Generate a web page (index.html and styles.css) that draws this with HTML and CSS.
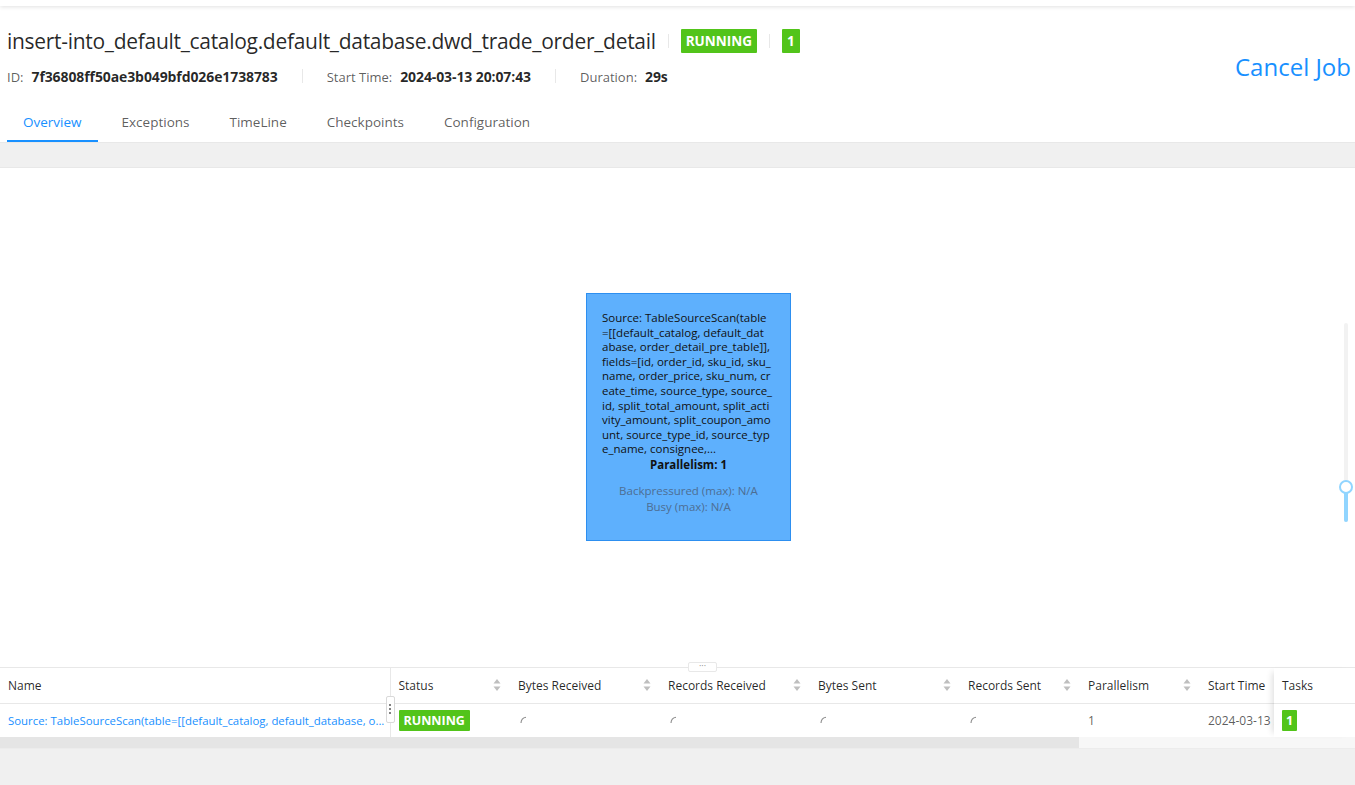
FILE: index.html
```html
<!DOCTYPE html>
<html>
<head>
<meta charset="utf-8">
<link rel="stylesheet" href="styles.css">
</head>
<body>
<div class="topbar"></div>
<header class="job-header">
  <div class="job-main">
    <div class="title-row">
      <h1 class="job-title">insert-into_default_catalog.default_database.dwd_trade_order_detail</h1>
      <span class="vdiv"></span>
      <span class="tag">RUNNING</span>
      <span class="vdiv"></span>
      <span class="tag tag-num">1</span>
    </div>
    <div class="meta-row">
      <span class="meta-item"><span class="meta-label">ID:</span><b class="meta-value">7f36808ff50ae3b049bfd026e1738783</b></span>
      <span class="meta-sep"></span>
      <span class="meta-item"><span class="meta-label">Start Time:</span><b class="meta-value">2024-03-13 20:07:43</b></span>
      <span class="meta-sep"></span>
      <span class="meta-item"><span class="meta-label">Duration:</span><b class="meta-value">29s</b></span>
    </div>
  </div>
  <a class="cancel-job">Cancel Job</a>
</header>
<nav class="tabs">
  <span class="tab active">Overview</span>
  <span class="tab">Exceptions</span>
  <span class="tab">TimeLine</span>
  <span class="tab">Checkpoints</span>
  <span class="tab">Configuration</span>
</nav>
<div class="band"></div>
<section class="canvas">
  <div class="node">
    <div class="node-desc">Source: TableSourceScan(table<br>=[[default_catalog, default_dat<br>abase, order_detail_pre_table]],<br>fields=[id, order_id, sku_id, sku_<br>name, order_price, sku_num, cr<br>eate_time, source_type, source_<br>id, split_total_amount, split_acti<br>vity_amount, split_coupon_amo<br>unt, source_type_id, source_typ<br>e_name, consignee,...</div>
    <div class="node-par">Parallelism: 1</div>
    <div class="node-stat">Backpressured (max): N/A<br>Busy (max): N/A</div>
  </div>
  <div class="zoom-slider">
    <div class="zoom-rail"></div>
    <div class="zoom-track"></div>
    <div class="zoom-handle"></div>
  </div>
</section>
<section class="table-panel">
  <div class="drag-handle">···</div>
  <div class="table-wrap">
    <div class="scroll-part">
      <table class="grid">
        <colgroup>
          <col class="c-name"><col class="c-120"><col class="c-150"><col class="c-150"><col class="c-150"><col class="c-120"><col class="c-120"><col class="c-150">
        </colgroup>
        <thead>
          <tr>
            <th class="name-col">Name</th>
            <th><div class="th-in">Status<svg class="sorter" width="8" height="14" viewBox="0 0 8 14"><path d="M4 1 L7.5 5.5 H0.5 Z M4 13 L7.5 8.5 H0.5 Z" fill="#bfbfbf"/></svg></div></th>
            <th><div class="th-in">Bytes Received<svg class="sorter" width="8" height="14" viewBox="0 0 8 14"><path d="M4 1 L7.5 5.5 H0.5 Z M4 13 L7.5 8.5 H0.5 Z" fill="#bfbfbf"/></svg></div></th>
            <th><div class="th-in">Records Received<svg class="sorter" width="8" height="14" viewBox="0 0 8 14"><path d="M4 1 L7.5 5.5 H0.5 Z M4 13 L7.5 8.5 H0.5 Z" fill="#bfbfbf"/></svg></div></th>
            <th><div class="th-in">Bytes Sent<svg class="sorter" width="8" height="14" viewBox="0 0 8 14"><path d="M4 1 L7.5 5.5 H0.5 Z M4 13 L7.5 8.5 H0.5 Z" fill="#bfbfbf"/></svg></div></th>
            <th><div class="th-in">Records Sent<svg class="sorter" width="8" height="14" viewBox="0 0 8 14"><path d="M4 1 L7.5 5.5 H0.5 Z M4 13 L7.5 8.5 H0.5 Z" fill="#bfbfbf"/></svg></div></th>
            <th><div class="th-in">Parallelism<svg class="sorter" width="8" height="14" viewBox="0 0 8 14"><path d="M4 1 L7.5 5.5 H0.5 Z M4 13 L7.5 8.5 H0.5 Z" fill="#bfbfbf"/></svg></div></th>
            <th>Start Time</th>
          </tr>
        </thead>
        <tbody>
          <tr>
            <td class="name-col"><a class="link">Source: TableSourceScan(table=[[default_catalog, default_database, o...</a><span class="col-resize"><i></i><i></i><i></i></span></td>
            <td><span class="tag tag-sm">RUNNING</span></td>
            <td><svg class="spin" width="8" height="8" viewBox="0 0 8 8"><path d="M1 7 A6 6 0 0 1 6 1.2" fill="none" stroke="#8c8c8c" stroke-width="1.1"/></svg></td>
            <td><svg class="spin" width="8" height="8" viewBox="0 0 8 8"><path d="M1 7 A6 6 0 0 1 6 1.2" fill="none" stroke="#8c8c8c" stroke-width="1.1"/></svg></td>
            <td><svg class="spin" width="8" height="8" viewBox="0 0 8 8"><path d="M1 7 A6 6 0 0 1 6 1.2" fill="none" stroke="#8c8c8c" stroke-width="1.1"/></svg></td>
            <td><svg class="spin" width="8" height="8" viewBox="0 0 8 8"><path d="M1 7 A6 6 0 0 1 6 1.2" fill="none" stroke="#8c8c8c" stroke-width="1.1"/></svg></td>
            <td class="muted">1</td>
            <td class="muted clip">2024-03-13 20:07:43</td>
          </tr>
        </tbody>
      </table>
    </div>
    <div class="fixed-part">
      <table class="grid">
        <thead><tr><th>Tasks</th></tr></thead>
        <tbody><tr><td><span class="tag tag-sm tag-num-sm">1</span></td></tr></tbody>
      </table>
    </div>
  </div>
  <div class="hscroll"><div class="hthumb"></div></div>
</section>
</body>
</html>
```
FILE: styles.css
```css
* { box-sizing: border-box; }
html, body { margin: 0; padding: 0; }
body {
  width: 1355px;
  height: 785px;
  overflow: hidden;
  background: #f0f0f0;
  font-family: "Open Sans", "Noto Sans", sans-serif;
  color: rgba(0,0,0,0.85);
  display: flex;
  flex-direction: column;
}
.topbar {
  height: 6px;
  background: #fff;
  box-shadow: 0 1px 4px rgba(0,0,0,0.12);
  position: relative;
  z-index: 2;
}
.job-header {
  background: #fff;
  display: flex;
  justify-content: space-between;
  align-items: flex-start;
  padding: 19px 4px 0 7px;
}
.title-row {
  display: flex;
  align-items: center;
  height: 32px;
}
.job-title {
  margin: 0;
  font-size: 21px;
  font-weight: 400;
  line-height: 32px;
  color: rgba(0,0,0,0.85);
  letter-spacing: -0.3px;
}
.vdiv {
  width: 1px;
  height: 14px;
  background: #e8e8e8;
  margin: 0 12px;
}
.tag {
  display: inline-block;
  background: #52c41a;
  color: #fff;
  font-weight: 700;
  font-size: 13.5px;
  line-height: 24px;
  height: 24px;
  padding: 0 5px;
  border-radius: 1px;
}
.tag-num { padding: 0 5px; }
.meta-row {
  display: flex;
  align-items: center;
  margin-top: 8px;
  height: 22px;
  font-size: 13px;
}
.meta-label { color: rgba(0,0,0,0.65); margin-right: 8px; }
.meta-value { color: rgba(0,0,0,0.85); font-weight: 700; font-size: 14px; letter-spacing: -0.1px; }
.meta-sep {
  width: 1px;
  height: 14px;
  background: #e8e8e8;
  margin: 0 24px;
}
.cancel-job {
  margin-top: 26px;
  font-size: 24px;
  line-height: 32px;
  color: #1890ff;
}
.tabs {
  background: #fff;
  display: flex;
  padding: 12px 0 0 7px;
  border-bottom: 1px solid #e8e8e8;
}
.tab {
  padding: 12px 16px 7px;
  margin-right: 8px;
  font-size: 13.5px;
  line-height: 22px;
  color: rgba(0,0,0,0.65);
  border-bottom: 2px solid transparent;
}
.tab.active {
  color: #1890ff;
  border-bottom-color: #1890ff;
}
.band {
  height: 25px;
  background: #f0f0f0;
  border-bottom: 1px solid #e8e8e8;
}
.canvas {
  position: relative;
  height: 499px;
  background: #fff;
}
.node {
  position: absolute;
  left: 586px;
  top: 125px;
  width: 205px;
  height: 248px;
  background: #5eb0fd;
  border: 1px solid #2d8ff0;
  padding: 17px 10px 0 15px;
  font-size: 11.5px;
  color: #111;
}
.node-desc { line-height: 14.6px; white-space: nowrap; }
.node-par {
  text-align: center;
  font-weight: 700;
  line-height: 16px;
  margin-top: 0;
  padding-right: 5px;
}
.node-stat {
  text-align: center;
  color: #4d6e93;
  line-height: 16px;
  margin-top: 10px;
  padding-right: 5px;
}
.zoom-slider {
  position: absolute;
  left: 1339px;
  top: 155px;
  width: 14px;
  height: 200px;
}
.zoom-rail {
  position: absolute;
  left: 5px;
  top: 0;
  width: 4px;
  height: 199px;
  background: #f2f2f2;
  border-radius: 2px;
}
.zoom-track {
  position: absolute;
  left: 5px;
  top: 164px;
  width: 4px;
  height: 35px;
  background: #91d5ff;
  border-radius: 2px;
}
.zoom-handle {
  position: absolute;
  left: 0;
  top: 157px;
  width: 14px;
  height: 14px;
  border-radius: 50%;
  border: 2px solid #91d5ff;
  background: #fff;
}
.table-panel {
  position: relative;
  background: #fff;
  border-top: 1px solid #e8e8e8;
}
.drag-handle {
  position: absolute;
  left: 688px;
  top: -6px;
  width: 29px;
  height: 10px;
  background: #fff;
  border: 1px solid #e8e8e8;
  border-radius: 2px;
  font-size: 9px;
  line-height: 6px;
  text-align: center;
  color: #8c8c8c;
  z-index: 3;
}
.table-wrap { display: flex; }
.scroll-part { flex: 1; overflow: hidden; }
.fixed-part {
  width: 81px;
  flex: none;
  position: relative;
  box-shadow: -6px 0 6px -4px rgba(0,0,0,0.12);
  z-index: 1;
}
.grid {
  border-collapse: collapse;
  table-layout: fixed;
  font-size: 12px;
}
.scroll-part .grid { width: 1350px; }
.fixed-part .grid { width: 81px; }
.c-name { width: 390px; }
.c-120 { width: 120px; }
.c-150 { width: 150px; }
.grid th {
  height: 35px;
  padding: 0 8px;
  text-align: left;
  font-weight: 400;
  color: rgba(0,0,0,0.85);
  border-bottom: 1px solid #e8e8e8;
  white-space: nowrap;
  overflow: hidden;
}
.grid td {
  height: 34px;
  padding: 0 8px;
  color: rgba(0,0,0,0.65);
  white-space: nowrap;
  overflow: hidden;
}
.grid td.clip { overflow: visible; }
.grid .name-col { border-right: 1px solid #e8e8e8; }
td.name-col { position: relative; overflow: visible; }
.th-in {
  display: flex;
  align-items: center;
  justify-content: space-between;
  padding-right: 1px;
}
.sorter { display: block; }
.link { color: #1890ff; font-size: 11.4px; }
.tag-sm {
  font-size: 12.5px;
  line-height: 21px;
  height: 21px;
  padding: 0 5px;
  vertical-align: middle;
}
.tag-num-sm { padding: 0 4px; }
.spin { display: block; margin-left: 2px; }
.muted { color: rgba(0,0,0,0.65); }
.col-resize {
  position: absolute;
  right: -5px;
  top: -8px;
  width: 9px;
  height: 27px;
  background: #fff;
  border: 1px solid #d9d9d9;
  border-radius: 2px;
  display: flex;
  flex-direction: column;
  align-items: center;
  justify-content: center;
  gap: 2px;
  z-index: 2;
}
.col-resize i {
  width: 2px;
  height: 2px;
  background: #595959;
  border-radius: 1px;
}
.hscroll {
  height: 12px;
  background: #f7f7f7;
  border-bottom: 1px solid #ececec;
}
.hthumb {
  width: 1079px;
  height: 11px;
  background: #e5e5e5;
}
```
